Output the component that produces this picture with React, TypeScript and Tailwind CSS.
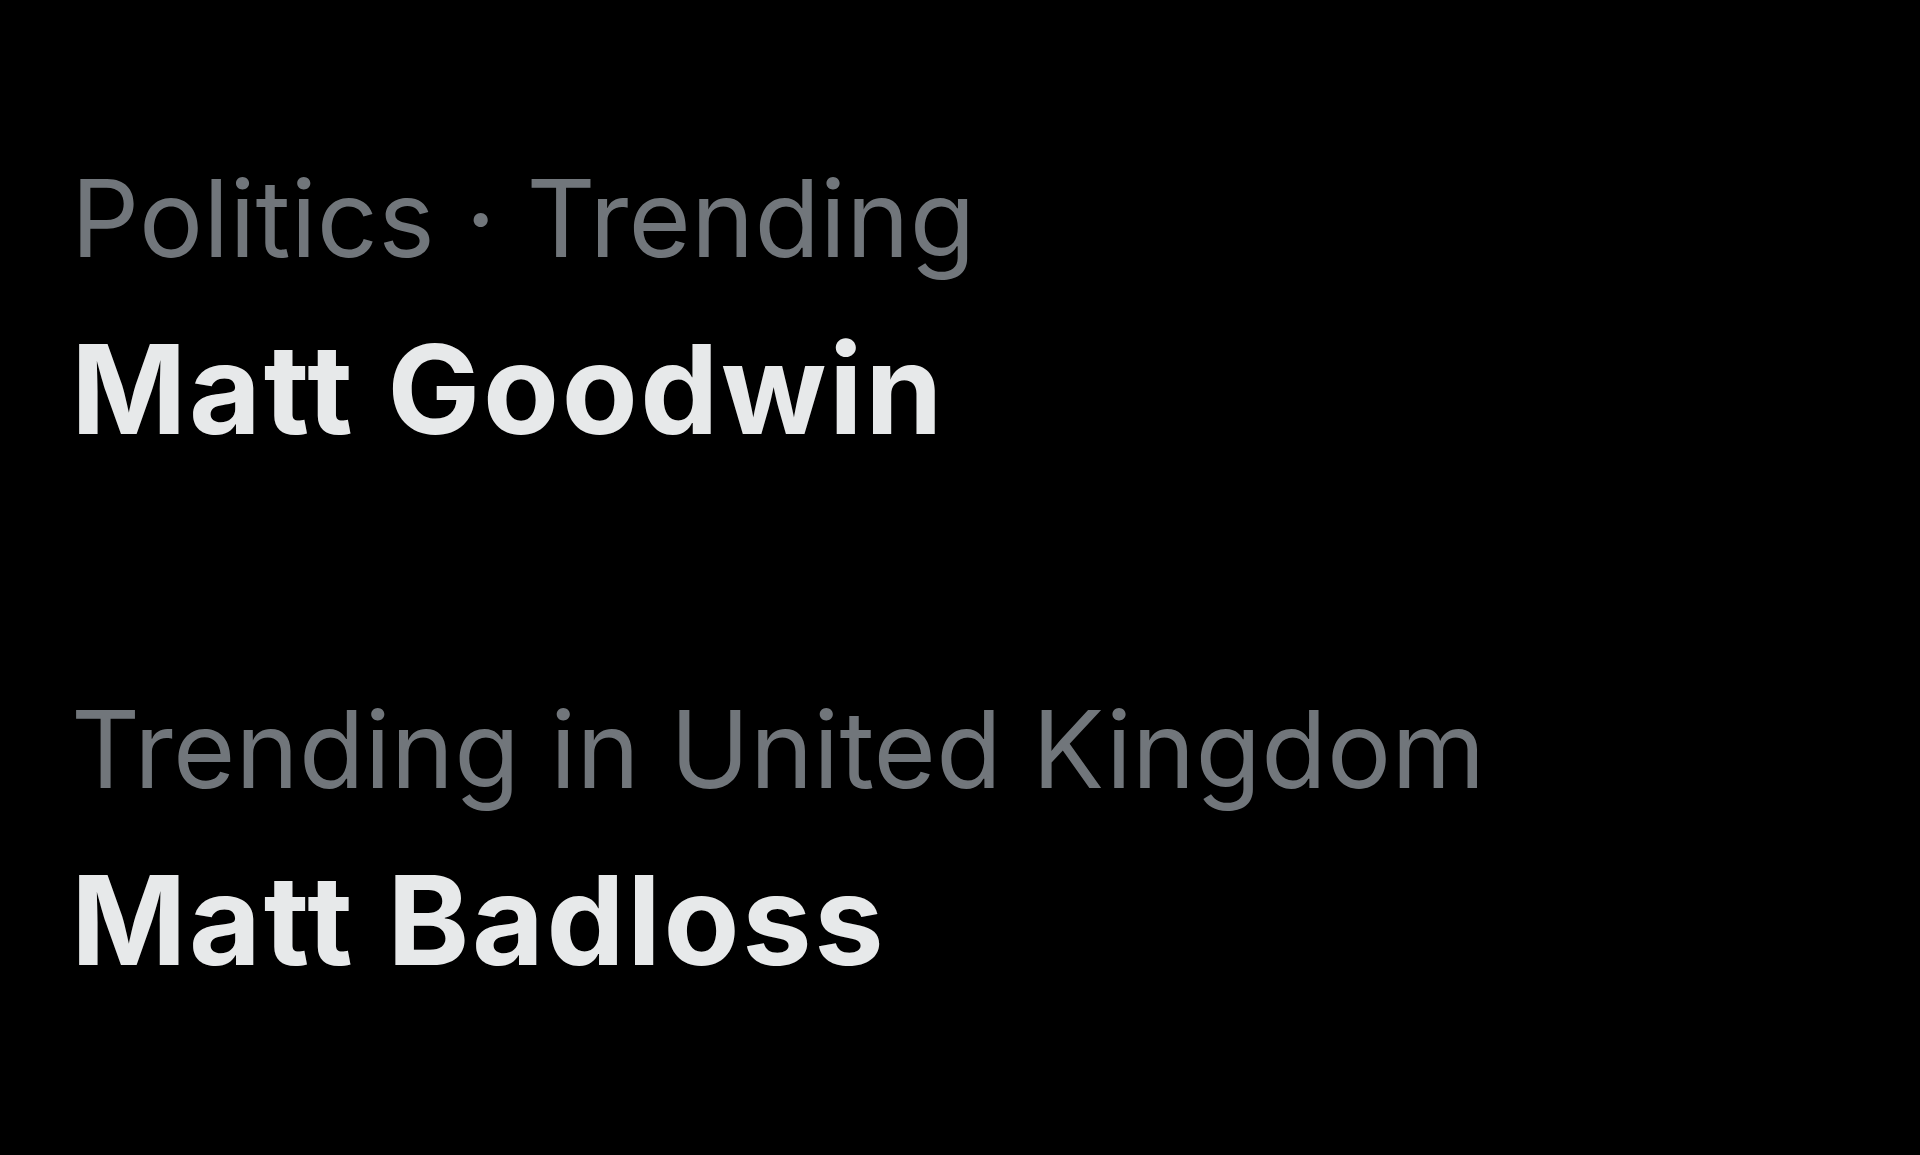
const trends = [
  { meta: 'Politics · Trending', title: 'Matt Goodwin' },
  { meta: 'Trending in United Kingdom', title: 'Matt Badloss' },
];

export default function App() {
  return (
    <div className="h-[1155px] w-full overflow-hidden bg-black font-['Inter','Noto_Sans',sans-serif]">
      <div className="flex flex-col pl-[71px] pt-[152px]">
        {trends.map((t) => (
          <div key={t.title} className="flex flex-col gap-[23px] pb-[211px]">
            <span className="text-[107px] leading-[132px] text-[#71767b] tracking-[0.2px]">{t.meta}</span>
            <span className="text-[124px] leading-[165px] font-bold text-[#e7e9ea] tracking-[2.6px]">{t.title}</span>
          </div>
        ))}
      </div>
    </div>
  );
}
